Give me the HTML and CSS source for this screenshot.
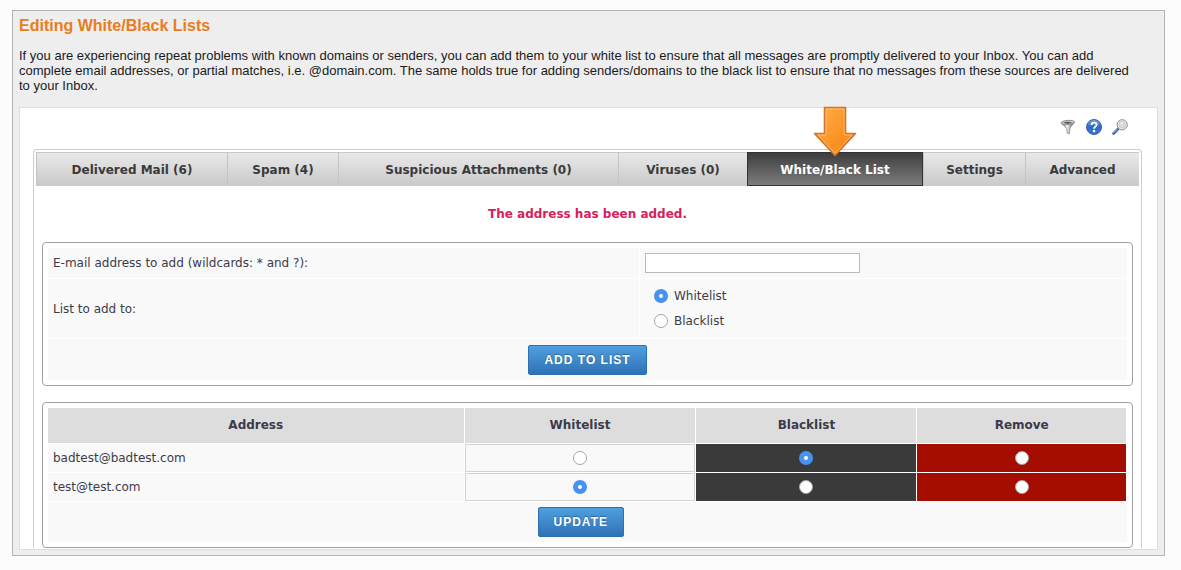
FILE: index.html
```html
<!DOCTYPE html>
<html lang="en">
  <head>
    <meta charset="utf-8">
    <title>Editing White/Black Lists</title>
    <link rel="stylesheet" href="styles.css">
  </head>
  <body>
    <div class="page">
      <h1>Editing White/Black Lists</h1>
      <p class="intro">If you are experiencing repeat problems with known domains or senders, you can add them to your white list to ensure that all messages are promptly delivered to your Inbox. You can add complete email addresses, or partial matches, i.e. @domain.com. The same holds true for adding senders/domains to the black list to ensure that no messages from these sources are delivered to your Inbox.</p>

      <main class="panel">
        <div class="tools">
          <a href="#" aria-label="Filter">
            <svg width="16" height="16" viewBox="0 0 16 16">
              <defs>
                <linearGradient id="metal" x1="0" x2="1">
                  <stop offset="0" stop-color="#555"/>
                  <stop offset=".45" stop-color="#f4f4f4"/>
                  <stop offset="1" stop-color="#555"/>
                </linearGradient>
              </defs>
              <path d="M1.2 4 L6.8 9.6 L7.2 14.2 L9.2 14.8 L10 9 L14.3 3.2 Z" fill="url(#metal)" stroke="#777" stroke-width=".7"/>
              <ellipse cx="7.8" cy="3.4" rx="6.7" ry="2" transform="rotate(-4 7.8 3.4)" fill="#d0d0d0" stroke="#777" stroke-width=".8"/>
              <path d="M3.5 3.2 Q6 5.2 9.5 4.6 L12 3.2 Q8 2.2 3.5 3.2 Z" fill="#555"/>
            </svg>
          </a>
          <a href="#" aria-label="Help">
            <svg width="16" height="16" viewBox="0 0 16 16">
              <defs>
                <linearGradient id="blue" x2="0" y2="1">
                  <stop offset="0" stop-color="#7ba6e6"/>
                  <stop offset=".5" stop-color="#3468c4"/>
                  <stop offset="1" stop-color="#3c78d4"/>
                </linearGradient>
              </defs>
              <circle cx="8" cy="8" r="7.5" fill="url(#blue)" stroke="#3560ae"/>
              <path d="M5.5 6 Q5.6 3.6 8.1 3.6 Q10.6 3.6 10.6 5.7 Q10.6 6.9 9.2 7.7 Q8.1 8.4 8.1 9.7" fill="none" stroke="#fff" stroke-width="1.8"/>
              <circle cx="8.1" cy="12" r="1.2" fill="#fff"/>
            </svg>
          </a>
          <a href="#" aria-label="Search">
            <svg width="16" height="16" viewBox="0 0 16 16">
              <path d="M1.6 14.4 L6 10" stroke="#3f68b4" stroke-width="2.8" stroke-linecap="round"/>
              <path d="M1.5 13.8 L5.5 9.8" stroke="#9dbbe8" stroke-width="1"/>
              <circle cx="10.2" cy="5.8" r="5.1" fill="#f2f2f2" stroke="#8a8a8a" stroke-width="1"/>
              <circle cx="10.2" cy="5.8" r="3.4" fill="#dcdcdc" stroke="#c4c4c4" stroke-width=".8"/>
              <path d="M8.4 5 Q9 3.8 10.8 3.8" fill="none" stroke="#fff"/>
            </svg>
          </a>
        </div>

        <div class="content">
          <nav class="tabs">
            <a href="#">Delivered Mail (6)</a>
            <a href="#">Spam (4)</a>
            <a href="#">Suspicious Attachments (0)</a>
            <a href="#">Viruses (0)</a>
            <a href="#" class="active">White/Black List
              <svg class="arrow" width="46" height="52" viewBox="0 0 46 52">
                <defs>
                  <linearGradient id="orange" x2="1" y2="1">
                    <stop offset="0" stop-color="#ffb04a"/>
                    <stop offset="1" stop-color="#fb7f0c"/>
                  </linearGradient>
                </defs>
                <path d="M12.5 1.5 H33.5 V27.5 H43.5 L23 49.5 L2.5 27.5 H12.5 Z" fill="url(#orange)" stroke="#cf7435" stroke-width="1.6" stroke-linejoin="round"/>
                <path d="M14 3 H32 V29 H40 L23 47.3 L6 29 H14 Z" fill="none" stroke="#ffb765" stroke-width="1"/>
              </svg>
            </a>
            <a href="#">Settings</a>
            <a href="#">Advanced</a>
          </nav>

          <p class="message">The address has been added.</p>

          <!-- add a new address -->
          <form class="box">
            <div class="add-grid">
              <label class="cell" for="email">E-mail address to add (wildcards: * and ?):</label>
              <div class="cell"><input type="text" id="email"></div>
              <span class="cell" id="list-label">List to add to:</span>
              <div class="cell choices" role="radiogroup" aria-labelledby="list-label">
                <label><input type="radio" name="list" checked> Whitelist</label>
                <label><input type="radio" name="list"> Blacklist</label>
              </div>
              <div class="cell actions"><button type="button">ADD TO LIST</button></div>
            </div>
          </form>

          <!-- current addresses -->
          <form class="box">
            <table>
              <colgroup>
                <col class="col-address">
                <col class="col-white">
                <col class="col-black">
                <col class="col-remove">
              </colgroup>
              <thead>
                <tr>
                  <th>Address</th>
                  <th>Whitelist</th>
                  <th>Blacklist</th>
                  <th>Remove</th>
                </tr>
              </thead>
              <tbody>
                <tr>
                  <td>badtest@badtest.com</td>
                  <td class="white"><input type="radio" name="row1" aria-label="Whitelist"></td>
                  <td class="black"><input type="radio" name="row1" aria-label="Blacklist" checked></td>
                  <td class="remove"><input type="radio" name="row1" aria-label="Remove"></td>
                </tr>
                <tr>
                  <td>test@test.com</td>
                  <td class="white"><input type="radio" name="row2" aria-label="Whitelist" checked></td>
                  <td class="black"><input type="radio" name="row2" aria-label="Blacklist"></td>
                  <td class="remove"><input type="radio" name="row2" aria-label="Remove"></td>
                </tr>
              </tbody>
              <tfoot>
                <tr>
                  <td colspan="4"><button type="button">UPDATE</button></td>
                </tr>
              </tfoot>
            </table>
          </form>
        </div>
      </main>
    </div>
  </body>
</html>
```
FILE: styles.css
```css
* {
  box-sizing: border-box;
}

body {
  margin: 10px 16px 14px 12px;
  background-color: #fcfcfc;
  font-family: Verdana, "DejaVu Sans", sans-serif;
  font-size: 12px;
  color: #3b3b4b;
}

.page {
  padding: 0 6px 5px;
  border: 1px solid #b4b4b4;
  background-color: #eeeeee;
  box-shadow: 0 2px 12px rgba(0, 0, 0, 0.3);
}

h1 {
  margin: 5px 0 12px;
  font-family: "Liberation Sans", Arial, sans-serif;
  font-size: 16px;
  line-height: 20px;
  color: #e97d1e;
}

.intro {
  margin: 0 0 14px;
  padding-right: 20px;
  font-family: "Liberation Sans", Arial, sans-serif;
  font-size: 13px;
  line-height: 15px;
  color: #1a1a1a;
}

.panel {
  padding: 0 15px 0 13px;
  border: 1px solid #dddddd;
  background-color: #ffffff;
}

.tools {
  display: flex;
  justify-content: flex-end;
  gap: 10px;
  padding: 11px 14px 14px;
}

.tools a {
  height: 16px;
}

.tools svg {
  display: block;
}

.content {
  padding: 2px 2px 0;
  border: 1px solid #cccccc;
  border-bottom: none;
  border-radius: 4px 4px 0 0;
}

.tabs {
  display: grid;
  grid-template-columns: 191fr 111fr 280fr 129fr 176fr 102fr 114fr;
}

.tabs a {
  position: relative;
  height: 34px;
  border-top: 1px solid #c8c8c8;
  border-left: 1px solid #c4c4c4;
  background-image: linear-gradient(#e9e9e9, #c9c9c9);
  font-size: 12px;
  font-weight: bold;
  line-height: 34px;
  text-align: center;
  text-decoration: none;
  color: #3a3a3a;
}

.tabs .active {
  border: 1px solid #333333;
  background-image: linear-gradient(#3e3e3e, #7c7c7c);
  color: #ffffff;
}

.arrow {
  position: absolute;
  left: 50%;
  bottom: 27px;
  margin-left: -23px;
}

.message {
  margin: 20px 0;
  font-weight: bold;
  line-height: 16px;
  text-align: center;
  color: #d81e5b;
}

.box {
  margin: 0 6px 16px;
  padding: 5px;
  border: 1px solid #a0a0a0;
  border-radius: 4px;
}

.box:last-child {
  margin-bottom: 1px;
}

.add-grid {
  display: grid;
  grid-template-columns: 591fr 487fr;
  gap: 1px;
}

.cell {
  display: flex;
  align-items: center;
  min-height: 30px;
  padding: 4px 5px;
  background-color: #f9f9f9;
}

.choices {
  flex-direction: column;
  align-items: flex-start;
  gap: 9px;
  padding: 9px 14px;
}

.choices label {
  display: flex;
  align-items: center;
  gap: 6px;
  line-height: 16px;
}

.actions {
  grid-column: 1 / 3;
  justify-content: center;
  height: 41px;
}

input[type="text"] {
  width: 215px;
  height: 20px;
  border: 1px solid #bbbbbb;
  background-color: #ffffff;
}

input[type="radio"] {
  appearance: none;
  display: inline-block;
  width: 14px;
  height: 14px;
  margin: 0;
  border: 1px solid #a6a6a6;
  border-radius: 50%;
  background-color: #ffffff;
  vertical-align: middle;
}

input[type="radio"]:checked {
  border: 5px solid #4791f0;
}

button {
  height: 30px;
  padding: 0 15px;
  border: 1px solid #2f6fae;
  border-radius: 2px;
  background-image: linear-gradient(#4f9fe0, #2f72b6);
  font-family: "Liberation Sans", Arial, sans-serif;
  font-size: 12px;
  font-weight: bold;
  letter-spacing: 1px;
  text-shadow: 0 -1px 1px rgba(0, 0, 0, 0.3);
  color: #ffffff;
}

table {
  width: 100%;
  border-collapse: collapse;
  table-layout: fixed;
}

.col-address {
  width: 416px;
}

.col-white {
  width: 21.5%;
}

.col-black {
  width: 20.5%;
}

th,
td {
  height: 29px;
  padding: 0 5px;
  background-color: #f9f9f9;
  background-clip: padding-box;
}

th {
  height: 35px;
  border-right: 1px solid #ffffff;
  border-bottom: 1px solid #ffffff;
  background-color: #dddddd;
}

tbody td {
  border-bottom: 1px solid #ffffff;
}

.white,
.black,
.remove {
  border: 1px solid #ffffff;
  text-align: center;
}

.white {
  box-shadow: inset 0 0 0 1px #d3d3d3;
}

.black {
  background-color: #3a3a3a;
}

.remove {
  background-color: #a40d00;
}

tfoot td {
  height: 41px;
  padding-right: 18px;
  text-align: center;
}
```
